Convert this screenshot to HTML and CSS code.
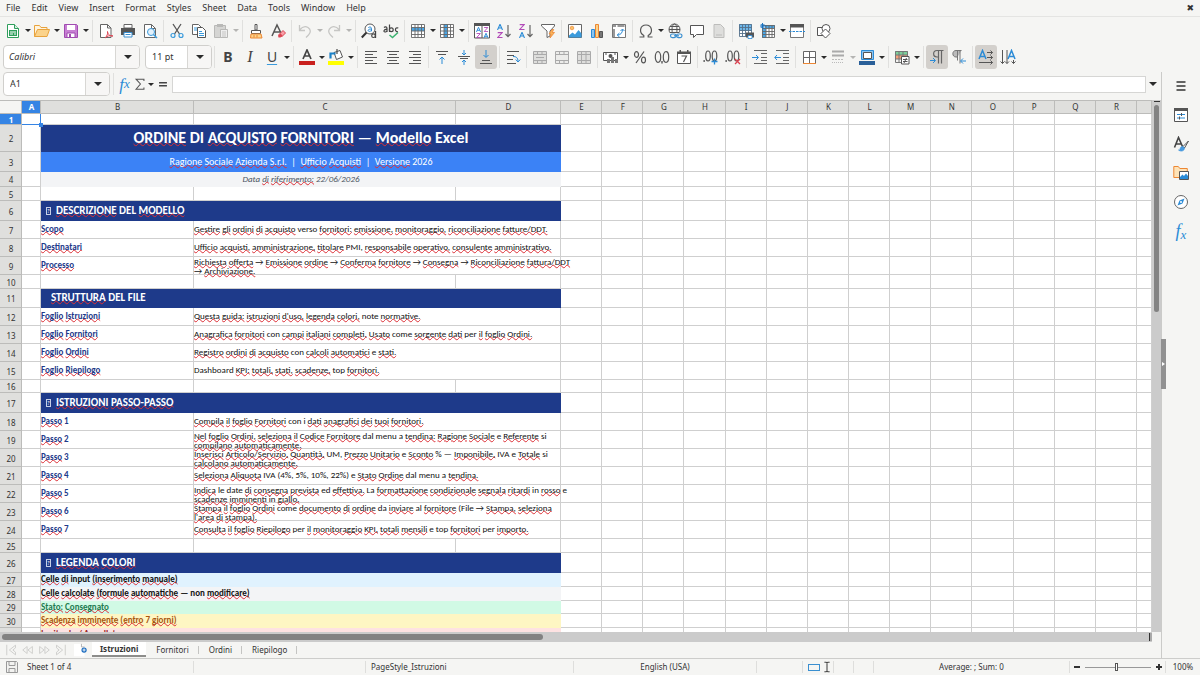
FILE: index.html
```html
<!DOCTYPE html>
<html lang="it">
<head>
<meta charset="utf-8">
<meta name="viewport" content="width=device-width, initial-scale=1">
<title>Ordine di acquisto fornitori</title>
<link rel="stylesheet" href="styles.css">
</head>
<body>
<svg class="sprite" aria-hidden="true">
  <symbol id="new" viewBox="0 0 16 16"><path d="M2.500 1.500h7l4 4v9h-11z" fill="#fff" stroke="#2e9e5b"/><path d="M9.500 1.500v4h4" fill="#d5f0df" stroke="#2e9e5b"/><path d="M4 7h8v6H4z" fill="#2e9e5b"/><path d="M5 9h6M5 11h3M9 11h2" stroke="#fff"/></symbol>
  <symbol id="open" viewBox="0 0 16 16"><path d="M.5 13.500V2.500h5l1.500 2h6v3" fill="#fff3dc" stroke="#e8a33d"/><path d="M.5 13.500l3-7h12l-2.500 7z" fill="#fbd38b" stroke="#e8a33d"/></symbol>
  <symbol id="save" viewBox="0 0 16 16"><path d="M1.500 1.500h12l1 1v12h-13z" fill="#c77fd3" stroke="#a04bb0"/><path d="M4 2h8v5H4z" fill="#fff"/><path d="M4 10h8v4.500H4z" fill="#fff" stroke="#a04bb0"/><path d="M6 11h2v3H6z" fill="#a04bb0"/></symbol>
  <symbol id="pdf" viewBox="0 0 16 16"><path d="M2.500 1.500h7l3.500 3.500v9.500h-10.500z" fill="#fff" stroke="#666"/><path d="M9.500 1.500V5H13" fill="none" stroke="#666"/><path d="M7 15c2-2 3-4 2.500-6.500C10 12 12 13 15 13c-3-1-6 0-8 2z" fill="#fff" stroke="#dc4452"/></symbol>
  <symbol id="print" viewBox="0 0 16 16"><path d="M4 1.500h8V5H4z" fill="#fff" stroke="#666"/><path d="M1 5h14v7H1z" fill="#555"/><path d="M4 9.500h8V14H4z" fill="#fff" stroke="#3a8fd0"/><path d="M5.500 11.500h5" stroke="#3a8fd0"/></symbol>
  <symbol id="preview" viewBox="0 0 16 16"><path d="M2.500 1.500h7l4 4v9h-11z" fill="#fff" stroke="#666"/><path d="M9.500 1.500v4h4" fill="none" stroke="#666"/><circle cx="9" cy="9" r="3.500" fill="#e3f1fb" stroke="#3a9bdc"/><path d="M11.500 11.500l3.500 3.500" stroke="#3a9bdc" stroke-width="1.500"/></symbol>
  <symbol id="cut" viewBox="0 0 16 16"><path d="M4 1l6.500 10M12 1L5.500 11" stroke="#555" stroke-width="1.300" fill="none"/><g fill="none" stroke="#3a9bdc" stroke-width="1.200"><circle cx="4" cy="12.500" r="2"/><circle cx="12" cy="12.500" r="2"/></g></symbol>
  <symbol id="copy" viewBox="0 0 16 16"><path d="M1.500 1.500h6L10 4v7.500H1.500z" fill="#fff" stroke="#666"/><path d="M6.500 4.500h5l3 3v7h-8z" fill="#fff" stroke="#555"/><path d="M3 5h3M3 7h3M8 8.500h3M8 10.500h5M8 12.500h5" stroke="#3a9bdc"/></symbol>
  <symbol id="paste" viewBox="0 0 16 16"><path d="M1.500 2.500h11v12h-11z" fill="#d5d5d3" stroke="#b9b9b7"/><path d="M4 1h6v3H4z" fill="#b9b9b7"/><path d="M7.500 6.500h7v8h-7z" fill="#eee" stroke="#b9b9b7"/><path d="M9 9h4M9 11h4M9 13h4" stroke="#c5c5c3"/></symbol>
  <symbol id="brush" viewBox="0 0 16 16"><path d="M7 1.500h2V7H7z" fill="#fff" stroke="#555"/><path d="M3.500 7.500h9v3h-9z" fill="#fff" stroke="#555"/><path d="M3 11h10l1 4H2.500z" fill="#fbd38b" stroke="#ed8733"/><path d="M6 12v2.500M9 12v2.500" stroke="#ed8733"/></symbol>
  <symbol id="clear" viewBox="0 0 16 16"><path d="M2 13L7 2l4 8M4 9h6" fill="none" stroke="#555" stroke-width="1.500"/><path d="M9 11.500l4-4 2.500 2.500-4 4z" fill="#f7a0a8" stroke="#dc4452"/><path d="M8 12.500l2.500-2 2 2-2 2H8.500z" fill="#dc4452"/></symbol>
  <symbol id="undo" viewBox="0 0 16 16"><path d="M2.500 2v5.500H8M2.500 7C5 4 8.500 3 11 4.500c3 2 3 5 .5 7.500L9 14.500" fill="none" stroke="#c6c6c4" stroke-width="1.300"/></symbol>
  <symbol id="redo" viewBox="0 0 16 16"><path d="M13.500 2v5.500H8M13.500 7C11 4 7.500 3 5 4.500c-3 2-3 5-.5 7.500L7 14.500" fill="none" stroke="#c6c6c4" stroke-width="1.300"/></symbol>
  <symbol id="find" viewBox="0 0 16 16"><circle cx="9" cy="6" r="5" fill="#fff" stroke="#555"/><path d="M5.500 9.500L.8 14.500" stroke="#333" stroke-width="2"/><path d="M7.300 4.600c1-1 3.200-.8 3.200.9v2.800M10.500 6c-4-.3-4.200 2.400-2 2.400 1 0 2-.7 2-1.500" fill="none" stroke="#2b8bd6"/><path d="M14.500 8v7" stroke="#444" stroke-width="1.300"/><circle cx="12.500" cy="12.700" r="1.800" fill="#f5f5f3" stroke="#444" stroke-width="1.200"/></symbol>
  <symbol id="spell" viewBox="0 0 16 16"><g fill="none" stroke="#444" stroke-width="1.200"><path d="M1 4.500c1-1 3-1 3 1V9M4 6.500C1 6 0 9 2 9c1 0 2-.8 2-1.500"/><path d="M6.500 1.500V9"/><circle cx="8.300" cy="6.800" r="1.900"/><path d="M15.300 5c-3.500-1.200-4 4-.3 3.800"/></g><path d="M6.500 12l3 2.500 5.500-5" fill="none" stroke="#3cb371" stroke-width="1.500"/></symbol>
  <symbol id="row" viewBox="0 0 16 16"><path d="M1 1h14v13.500H1z" fill="#fff"/><path d="M1 4.500h14v3.500H1z" fill="#4aa5e4"/><path d="M1.500 1.500h13v13h-13zM1.500 4.500h13M1.500 8h13M1.500 11.500h13M5 1.500v13M8 1.500v13M11.500 1.500v13" fill="none" stroke="#666" stroke-width=".9"/></symbol>
  <symbol id="col" viewBox="0 0 16 16"><path d="M1 1h14v13.500H1z" fill="#fff"/><path d="M5 1h3.500v14H5z" fill="#4aa5e4"/><path d="M1.500 1.500h13v13h-13zM1.500 4.500h13M1.500 8h13M1.500 11.500h13M5 1.500v13M8.500 1.500v13M11.500 1.500v13" fill="none" stroke="#666" stroke-width=".9"/></symbol>
  <symbol id="lA" viewBox="0 0 6 6"><path d="M.5 6L3 .3 5.500 6M1.300 4h3.400" fill="none" stroke="#2b8bd6" stroke-width="1.100"/></symbol>
  <symbol id="lZ" viewBox="0 0 6 6"><path d="M.7.600h4.500L.8 5.500h4.700" fill="none" stroke="#b24bb8" stroke-width="1.100"/></symbol>
  <symbol id="sort" viewBox="0 0 16 16"><path d="M.5.500h15v14.500H.5z" fill="#fff" stroke="#555"/><path d="M0 0h16v3H0z" fill="#555"/><path d="M8 3v12" stroke="#555"/><use href="#lA" x="2" y="4" width="5" height="5"/><use href="#lZ" x="2" y="10" width="5" height="5"/><use href="#lZ" x="9.500" y="4" width="5" height="5"/><use href="#lA" x="9.500" y="10" width="5" height="5"/></symbol>
  <symbol id="az" viewBox="0 0 16 16"><use href="#lA" x="1" y="1" width="6" height="6"/><use href="#lZ" x="1" y="9" width="6" height="6"/><path d="M12 2v11.500M9.500 11l2.500 2.700 2.500-2.700" fill="none" stroke="#666" stroke-width="1.200"/></symbol>
  <symbol id="za" viewBox="0 0 16 16"><use href="#lZ" x="1" y="1" width="6" height="6"/><use href="#lA" x="1" y="9" width="6" height="6"/><path d="M12 2v11.500M9.500 11l2.500 2.700 2.500-2.700" fill="none" stroke="#666" stroke-width="1.200"/></symbol>
  <symbol id="filter" viewBox="0 0 16 16"><path d="M1.500 1.500h13v1.500L10 8v5l-3 1.500V8L1.500 3z" fill="#fff" stroke="#666"/><path d="M12 6.500L9 11h2l-1 4 4.500-5.500h-2.300l1.500-3z" fill="#f9b65c" stroke="#ed8733" stroke-width=".8"/></symbol>
  <symbol id="image" viewBox="0 0 16 16"><path d="M1.500 1.500h13v13h-13z" fill="#fff" stroke="#666"/><circle cx="5" cy="5" r="1.800" fill="#f9c36b" stroke="#ed8733" stroke-width=".7"/><path d="M2 12.500l3.500-3 2.500 2 3.500-4.500 3 3.500v4H2z" fill="#3a9bdc"/></symbol>
  <symbol id="chart" viewBox="0 0 16 16"><path d="M2.500 6.500h3v8h-3z" fill="#8cc4ef" stroke="#2b8bd6"/><path d="M6.500 1.500h3v13h-3z" fill="#fbd38b" stroke="#ed8733"/><path d="M10.500 8.500h3v6h-3z" fill="#777" stroke="#555"/></symbol>
  <symbol id="pivot" viewBox="0 0 16 16"><path d="M1.500 1.500h13v13h-13z" fill="#fff" stroke="#777"/><path d="M2 3h3M6.500 3h7M3 6v8" stroke="#999" stroke-width="2"/><path d="M6.500 12c3 0 5-2 5-5.500M9.500 8l2-2 2 2M8.500 10l-2.300 2 2.300 2" fill="none" stroke="#2b8bd6"/></symbol>
  <symbol id="omega" viewBox="0 0 16 16"><path d="M1.500 14h4.300v-1.500C.5 9.500 2 2 8 2s7.500 7.500 2.200 10.500V14h4.300" fill="none" stroke="#555" stroke-width="1.200"/></symbol>
  <symbol id="link" viewBox="0 0 16 16"><g fill="none" stroke="#555"><circle cx="7.500" cy="6.500" r="5.500"/><ellipse cx="7.500" cy="6.500" rx="2.500" ry="5.500"/><path d="M2 6.500h11M3 3.500h9M3 9.500h9"/></g><path d="M3 10h13v6H3z" fill="#f5f5f3"/><g fill="none" stroke="#3a8fd0" stroke-width="1.200"><rect x="3.500" y="11" width="5.500" height="3.600" rx="1.800"/><rect x="9.500" y="11" width="5.500" height="3.600" rx="1.800"/><path d="M7 12.800h5"/></g></symbol>
  <symbol id="comment" viewBox="0 0 16 16"><path d="M1.500 2.500h13v9H7.500l-3 3v-3h-3z" fill="#fff" stroke="#555"/></symbol>
  <symbol id="header" viewBox="0 0 16 16"><path d="M3 1.500h6.500l3.500 3.500v9.500H3z" fill="#dededc" stroke="#bdbdbb"/><path d="M5 12h6" stroke="#bdbdbb"/></symbol>
  <symbol id="area" viewBox="0 0 16 16"><path d="M1 1h13v12H1z" fill="#fff"/><path d="M1 1h13v7H1z" fill="#6db7ea"/><path d="M1.500 1.500h12v12h-12zM1.500 4.500h12M1.500 7.500h12M1.500 10.500h12M4.500 1.500v12M7.500 1.500v12M10.500 1.500v12" fill="none" stroke="#55718a" stroke-width=".9"/><path d="M8 9.500h8v5H8z" fill="#555"/><path d="M10 12.500h4v3h-4z" fill="#fff" stroke="#2b8bd6" stroke-width=".8"/></symbol>
  <symbol id="freeze" viewBox="0 0 16 16"><path d="M2 2h13v13H2z" fill="#fff"/><path d="M5 2h10v3H5zM2 5h4v10H2z" fill="#4aa5e4"/><path d="M2.500 2.500h12v12h-12zM2.500 5.500h12M2.500 8.500h12M2.500 11.500h12M6 2.500v12M9 2.500v12M12 2.500v12" fill="none" stroke="#666" stroke-width=".9"/><path d="M2.500 0v6M0 3h6M.8 1l3.500 4M4.300 1L.8 5" stroke="#1a73c0"/></symbol>
  <symbol id="split" viewBox="0 0 16 16"><path d="M1.500 1.500h13v13h-13z" fill="#fff" stroke="#777"/><path d="M1 1h14v3.500H1z" fill="#555"/><path d="M0 8.500h16" stroke="#2b8bd6" stroke-dasharray="2.500 1"/></symbol>
  <symbol id="shapes" viewBox="0 0 16 16"><g fill="#fff" stroke="#555"><path d="M1.500 4.500h8v8h-8z"/><circle cx="10" cy="5.500" r="4"/><path d="M9.500 6L14 10.500 9.500 15 5 10.500z"/></g></symbol>
  <symbol id="fontcolor" viewBox="0 0 16 16"><path d="M4 10L8 1l4 9M5.300 7h5.400" fill="none" stroke="#444" stroke-width="1.700"/><path d="M0 12h16v4H0z" fill="#c9211e"/></symbol>
  <symbol id="fill" viewBox="0 0 16 16"><path d="M6 3.500l6-2 2.500 6.500-6 2.500z" fill="#fff" stroke="#555"/><path d="M9 0v5" stroke="#555" stroke-width="1.300"/><path d="M2.500 9.500V4.500h5" fill="none" stroke="#1c82c9" stroke-width="2.200"/><path d="M0 12h16v4H0z" fill="#ffff00"/></symbol>
  <symbol id="left" viewBox="0 0 16 16"><path d="M2 2.500h12M2 5.500h8M2 8.500h12M2 11.500h8M2 14.500h12" stroke="#555"/></symbol>
  <symbol id="center" viewBox="0 0 16 16"><path d="M2 2.500h12M4 5.500h8M2 8.500h12M4 11.500h8M2 14.500h12" stroke="#555"/></symbol>
  <symbol id="right" viewBox="0 0 16 16"><path d="M2 2.500h12M6 5.500h8M2 8.500h12M6 11.500h8M2 14.500h12" stroke="#555"/></symbol>
  <symbol id="top" viewBox="0 0 16 16"><path d="M2 2.500h12M4 5.500h8" stroke="#555"/><path d="M8 15V8.500M5.500 10.500L8 8l2.500 2.500" fill="none" stroke="#2b8bd6"/></symbol>
  <symbol id="middle" viewBox="0 0 16 16"><path d="M2 7.500h12M4 9.500h8" stroke="#555"/><path d="M8 1v4.500M6 4l2 2 2-2M8 16v-4.500M6 13l2-2 2 2" fill="none" stroke="#2b8bd6"/></symbol>
  <symbol id="bottom" viewBox="0 0 16 16"><path d="M2 14.500h12M4 11.500h8" stroke="#555"/><path d="M8 1v7M5.500 6L8 8.500 10.500 6" fill="none" stroke="#2b8bd6"/></symbol>
  <symbol id="wrap" viewBox="0 0 16 16"><path d="M2 2.500h12M2 6.500h7M2 10.500h6M2 14.500h9" stroke="#555"/><path d="M8 7.500c3 0 5 1 5 5M10.700 10.500l2.300 2.500 2.300-2.500" fill="none" stroke="#2b8bd6"/></symbol>
  <symbol id="mergeA" viewBox="0 0 16 16"><path d="M1.500 2.500h13v12h-13z" fill="#dededc" stroke="#aaa"/><path d="M1 5.500h14M1 11.500h14M5.500 2v3.500M10 2v3.500M5.500 12v3M10 12v3M4 8.500h8" stroke="#aaa"/></symbol>
  <symbol id="mergeB" viewBox="0 0 16 16"><path d="M1.500 2.500h13v12h-13z" fill="#ececea" stroke="#aaa"/><path d="M1 5.500h14M1 11.500h14M5.500 2v3.500M10 2v3.500M5.500 12v3M10 12v3" stroke="#aaa"/></symbol>
  <symbol id="mergeC" viewBox="0 0 16 16"><path d="M1.500 2.500h13v12h-13z" fill="#dededc" stroke="#aaa"/><path d="M1 5.500h14M1 11.500h14M5.500 2v13M10 2v13" stroke="#aaa"/></symbol>
  <symbol id="currency" viewBox="0 0 16 16"><path d="M.5 3.500h14v8H.5z" fill="#fff" stroke="#555"/><circle cx="7.500" cy="7" r="2" fill="#555"/><path d="M2 5h2M11 5h2" stroke="#555"/><path d="M4 10h3v4H4zM8 8h3v6H8zM12 10h3v4h-3z" fill="#777"/></symbol>
  <symbol id="percent" viewBox="0 0 16 16"><g fill="none" stroke="#555" stroke-width="1.200"><ellipse cx="4.500" cy="5.500" rx="2" ry="2.800"/><ellipse cx="11.500" cy="11" rx="2" ry="2.800"/><path d="M12 2.500L4 14"/></g></symbol>
  <symbol id="number" viewBox="0 0 16 16"><g fill="none" stroke="#555" stroke-width="1.200"><ellipse cx="4" cy="8" rx="2.700" ry="5.300"/><ellipse cx="12" cy="8" rx="2.700" ry="5.300"/></g><path d="M7.300 12h1.400v2.500H7.300z" fill="#555"/></symbol>
  <symbol id="date" viewBox="0 0 16 16"><path d="M1.500 3.500h13v11h-13z" fill="#fff" stroke="#555"/><path d="M1 2.500h14V5H1zM3.500 1h1.500v2H3.500zM11 1h1.500v2H11z" fill="#555"/><path d="M5.500 7h5l-3 6" fill="none" stroke="#555" stroke-width="1.200"/></symbol>
  <symbol id="decadd" viewBox="0 0 16 16"><g fill="none" stroke="#555" stroke-width="1.200"><ellipse cx="5" cy="7" rx="2.300" ry="5"/><ellipse cx="11.500" cy="7" rx="2.300" ry="5"/></g><path d="M.5 11h1.300v2H.5z" fill="#555"/><path d="M11.500 9.500v6M8.500 12.500h6" stroke="#2b8bd6" stroke-width="1.300"/></symbol>
  <symbol id="decdel" viewBox="0 0 16 16"><g fill="none" stroke="#555" stroke-width="1.200"><ellipse cx="5" cy="7" rx="2.300" ry="5"/><ellipse cx="11.500" cy="7" rx="2.300" ry="5"/></g><path d="M.5 11h1.300v2H.5z" fill="#555"/><path d="M10 10l5 5M15 10l-5 5" stroke="#dc4452" stroke-width="1.300"/></symbol>
  <symbol id="indent" viewBox="0 0 16 16"><path d="M2 1.500h13M9 4.500h6M9 8.500h6M9 11.500h6M2 14.500h13" stroke="#666"/><path d="M0 8.500h6M4 6l2.500 2.500L4 11" fill="none" stroke="#2b8bd6"/></symbol>
  <symbol id="outdent" viewBox="0 0 16 16"><path d="M2 1.500h13M9 4.500h6M9 8.500h6M9 11.500h6M2 14.500h13" stroke="#666"/><path d="M7 8.500H1M3 6L.7 8.500 3 11" fill="none" stroke="#2b8bd6"/></symbol>
  <symbol id="border" viewBox="0 0 16 16"><path d="M2.500 14.500v-12h12v12" fill="#fff" stroke="#666"/><path d="M8.500 2.500v12M2.500 8.500h12" stroke="#666"/><path d="M2 14.500h13" stroke="#ed8733"/></symbol>
  <symbol id="lines" viewBox="0 0 16 16"><path d="M2 2.500h12M2 6.500h12" stroke="#aaa" stroke-width="2"/><path d="M2 10.500h12" stroke="#bbb" stroke-dasharray="2 1"/><path d="M2 13.500h12" stroke="#bbb" stroke-dasharray="1 1"/></symbol>
  <symbol id="bcolor" viewBox="0 0 16 16"><path d="M2.500 1.500h12v9h-12z" fill="#8cc4ef" stroke="#2b8bd6"/><path d="M4.500 3.500h8v6h-8z" fill="#fff" stroke="#555"/><path d="M0 12h16v4H0z" fill="#2a6099"/></symbol>
  <symbol id="cond" viewBox="0 0 16 16"><path d="M1 2h13v4H1z" fill="#7ccf9a"/><path d="M1 6h13v4H1z" fill="#f7a07a"/><path d="M1.500 2.500h12v11h-12zM1.500 6h12M1.500 10h12M5 2.500v11M9 2.500v11" fill="none" stroke="#777"/><path d="M7.500 7.500h7.500v7.500H7.500z" fill="#fff" stroke="#555"/><path d="M9 10.500h4.500M9 12.500h4.500M12.500 9l-2.500 5" stroke="#555"/></symbol>
  <symbol id="ltr" viewBox="0 0 16 16"><path d="M14.500 1.500H8C3.500 1.500 3.500 8 8 8h1.500M9.500 1.500v13M12.500 1.500v13" fill="none" stroke="#666" stroke-width="1.200"/><path d="M1 11.500h5M4 9l2.500 2.500L4 14" fill="none" stroke="#2b8bd6"/></symbol>
  <symbol id="rtl" viewBox="0 0 16 16"><path d="M10.500 1.500H5C.8 1.500.8 8 5 8h1.500z" fill="#bbb"/><path d="M10.500 1.500H5C.8 1.500.8 8 5 8h1.500M6.500 1.500v10M9 1.500v13" fill="none" stroke="#777"/><path d="M15 12h-5M12 9.500L9.500 12l2.500 2.500" fill="none" stroke="#2b8bd6"/></symbol>
  <symbol id="dirh" viewBox="0 0 16 16"><path d="M1 10L4.500 1.500 8 10M2.200 7.500h4.600" fill="none" stroke="#2b8bd6" stroke-width="1.500"/><path d="M9 3.500h5.500M12.500 1.500l2 2-2 2M9 8.500h5.500M12.500 6.500l2 2-2 2M1 13.500h13.500M12.500 11.500l2 2-2 2" fill="none" stroke="#555"/></symbol>
  <symbol id="dirv" viewBox="0 0 16 16"><path d="M8 10l3.500-8.500L15 10M9.200 7.500h4.600" fill="none" stroke="#2b8bd6" stroke-width="1.500"/><path d="M2.500 1v13.500M.5 12.500l2 2 2-2M7 1v13.500M5 12.500l2 2 2-2M13.500 11v3.500M11.500 12.500l2 2 2-2" fill="none" stroke="#555"/></symbol>
  <symbol id="sum" viewBox="0 0 16 16"><path d="M12.500 4.500V2.500h-9L8.500 8l-5 6h9v-2" fill="none" stroke="#555" stroke-width="1.200"/></symbol>
  <symbol id="equal" viewBox="0 0 16 16"><path d="M3.500 6.500h9M3.500 10h9" stroke="#444" stroke-width="1.600"/></symbol>
  <symbol id="menu" viewBox="0 0 16 16"><path d="M3.500 4h9M3.500 8h9M3.500 12h9" stroke="#333" stroke-width="1.400"/></symbol>
  <symbol id="props" viewBox="0 0 16 16"><path d="M1.500 1.500h13v13h-13z" fill="#fff" stroke="#555"/><path d="M1 1h14v3H1z" fill="#555"/><path d="M4 7.500h8M4 11h8" stroke="#2b8bd6"/><path d="M8.500 6v3M6.500 9.500v3" stroke="#555"/></symbol>
  <symbol id="stylesi" viewBox="0 0 16 16"><path d="M1.500 11.500L5.500 1.500l4 9M3 8h5.500" fill="none" stroke="#444" stroke-width="1.600"/><path d="M15.500 5L10 10.500l1.500 1.500L15.500 5z" fill="#fff" stroke="#555"/><path d="M10 10.500c-2 0-3 1-3 3.500H5.500c2.500 2 6 1 6-2z" fill="#4a9be0" stroke="#2b8bd6" stroke-width=".6"/></symbol>
  <symbol id="gallery" viewBox="0 0 16 16"><path d="M.8 12.500V1.500h4.500l1.500 2h7.500v9z" fill="#fde3b8" stroke="#ed8733"/><path d="M6.500 6.500h9v8h-9z" fill="#fff" stroke="#555"/><path d="M7 12l2.500-2.500L11 11l2-2.500 2 2.500v3H7z" fill="#2b8bd6"/></symbol>
  <symbol id="nav" viewBox="0 0 16 16"><circle cx="8" cy="8" r="6.500" fill="#fff" stroke="#666"/><path d="M11.500 4.500L9.500 9.500l-5 2 2-5z" fill="#2b8bd6"/><circle cx="8" cy="8" r="1" fill="#fff"/></symbol>
  <symbol id="ibeam" viewBox="0 0 16 16"><path d="M5 2.500h2l1 .5 1-.5h2M5 13.500h2l1-.5 1 .5h2M8 3v10" fill="none" stroke="#444" stroke-width="1.200"/></symbol>
  <symbol id="disk" viewBox="0 0 16 16"><path d="M2.500 2.500h10l1 1v10h-11z" fill="#f2f2f0" stroke="#999"/><path d="M5 2.500h6v4H5zM5 13.500v-4h6v4" fill="none" stroke="#999"/></symbol>
  <symbol id="addsheet" viewBox="0 0 16 16"><path d="M0 1h9l3 3v11H0z" fill="#fff"/><path d="M8.500 1v3.500H12" fill="none" stroke="#aaa"/><circle cx="11.500" cy="8" r="3" fill="#1a6bbf"/><path d="M11.500 6.200v3.600M9.700 8h3.600" stroke="#fff"/></symbol>
  <symbol id="first" viewBox="0 0 16 16"><path d="M2 2v12M12 2.500L5 8l7 5.500v-3L9 8l3-2.500z" fill="none" stroke="#cacac8"/></symbol>
  <symbol id="prev" viewBox="0 0 16 16"><path d="M7 4L2 8l5 4zM13 4L8 8l5 4z" fill="none" stroke="#cacac8"/></symbol>
</svg>

<nav class="menubar" aria-label="Menu">
  <button>File</button><button>Edit</button><button>View</button><button>Insert</button><button>Format</button><button>Styles</button><button>Sheet</button><button>Data</button><button>Tools</button><button>Window</button><button>Help</button>
  <button class="close" aria-label="Close document">✖</button>
</nav>

<div class="toolbar standard" role="toolbar" aria-label="Standard">
  <button class="tool" aria-label="New"><svg><use href="#new"/></svg></button><button class="caret" aria-label="New options"></button>
  <button class="tool" aria-label="Open"><svg><use href="#open"/></svg></button><button class="caret" aria-label="Open options"></button>
  <button class="tool" aria-label="Save"><svg><use href="#save"/></svg></button><button class="caret" aria-label="Save options"></button>
  <span class="sep"></span>
  <button class="tool" aria-label="Export as PDF"><svg><use href="#pdf"/></svg></button>
  <button class="tool" aria-label="Print"><svg><use href="#print"/></svg></button>
  <button class="tool" aria-label="Print preview"><svg><use href="#preview"/></svg></button>
  <span class="sep"></span>
  <button class="tool" aria-label="Cut"><svg><use href="#cut"/></svg></button>
  <button class="tool" aria-label="Copy"><svg><use href="#copy"/></svg></button>
  <button class="tool" aria-label="Paste" disabled><svg><use href="#paste"/></svg></button><button class="caret" aria-label="Paste options" disabled></button>
  <span class="sep"></span>
  <button class="tool" aria-label="Clone formatting"><svg><use href="#brush"/></svg></button>
  <button class="tool" aria-label="Clear formatting"><svg><use href="#clear"/></svg></button>
  <span class="sep"></span>
  <button class="tool" aria-label="Undo" disabled><svg><use href="#undo"/></svg></button><button class="caret" aria-label="Undo list" disabled></button>
  <button class="tool" aria-label="Redo" disabled><svg><use href="#redo"/></svg></button><button class="caret" aria-label="Redo list" disabled></button>
  <span class="sep"></span>
  <button class="tool" aria-label="Find and replace"><svg><use href="#find"/></svg></button>
  <button class="tool" aria-label="Spelling"><svg><use href="#spell"/></svg></button>
  <span class="sep"></span>
  <button class="tool" aria-label="Row"><svg><use href="#row"/></svg></button><button class="caret" aria-label="Row options"></button>
  <button class="tool" aria-label="Column"><svg><use href="#col"/></svg></button><button class="caret" aria-label="Column options"></button>
  <span class="sep"></span>
  <button class="tool" aria-label="Sort"><svg><use href="#sort"/></svg></button>
  <button class="tool" aria-label="Sort ascending"><svg><use href="#az"/></svg></button>
  <button class="tool" aria-label="Sort descending"><svg><use href="#za"/></svg></button>
  <button class="tool" aria-label="AutoFilter"><svg><use href="#filter"/></svg></button>
  <span class="sep"></span>
  <button class="tool" aria-label="Insert image"><svg><use href="#image"/></svg></button>
  <button class="tool" aria-label="Insert chart"><svg><use href="#chart"/></svg></button>
  <button class="tool" aria-label="Pivot table"><svg><use href="#pivot"/></svg></button>
  <span class="sep"></span>
  <button class="tool" aria-label="Special character"><svg><use href="#omega"/></svg></button><button class="caret" aria-label="Character list"></button>
  <button class="tool" aria-label="Hyperlink"><svg><use href="#link"/></svg></button>
  <button class="tool" aria-label="Comment"><svg><use href="#comment"/></svg></button>
  <button class="tool" aria-label="Headers and footers" disabled><svg><use href="#header"/></svg></button>
  <span class="sep"></span>
  <button class="tool" aria-label="Print area"><svg><use href="#area"/></svg></button>
  <button class="tool" aria-label="Freeze panes"><svg><use href="#freeze"/></svg></button><button class="caret" aria-label="Freeze options"></button>
  <button class="tool" aria-label="Split window"><svg><use href="#split"/></svg></button>
  <span class="sep"></span>
  <button class="tool" aria-label="Draw functions"><svg><use href="#shapes"/></svg></button>
</div>

<div class="toolbar formatting" role="toolbar" aria-label="Formatting">
  <span class="combo font"><input class="italic" aria-label="Font name" value="Calibri"><button aria-label="Font list"></button></span>
  <span class="combo size"><input aria-label="Font size" value="11 pt"><button aria-label="Size list"></button></span>
  <span class="sep"></span>
  <button class="tool letter bold" aria-label="Bold">B</button>
  <button class="tool letter slanted" aria-label="Italic">I</button>
  <button class="tool letter under" aria-label="Underline">U</button><button class="caret" aria-label="Underline options"></button>
  <span class="sep"></span>
  <button class="tool" aria-label="Font color"><svg><use href="#fontcolor"/></svg></button><button class="caret" aria-label="Font colors"></button>
  <button class="tool" aria-label="Background color"><svg><use href="#fill"/></svg></button><button class="caret" aria-label="Background colors"></button>
  <span class="sep"></span>
  <button class="tool" aria-label="Align left"><svg><use href="#left"/></svg></button>
  <button class="tool" aria-label="Align center"><svg><use href="#center"/></svg></button>
  <button class="tool" aria-label="Align right"><svg><use href="#right"/></svg></button>
  <span class="sep"></span>
  <button class="tool" aria-label="Align top"><svg><use href="#top"/></svg></button>
  <button class="tool" aria-label="Center vertically"><svg><use href="#middle"/></svg></button>
  <button class="tool active" aria-label="Align bottom" aria-pressed="true"><svg><use href="#bottom"/></svg></button>
  <span class="sep"></span>
  <button class="tool" aria-label="Wrap text"><svg><use href="#wrap"/></svg></button>
  <span class="sep"></span>
  <button class="tool" aria-label="Merge and center" disabled><svg><use href="#mergeA"/></svg></button>
  <button class="tool" aria-label="Merge cells" disabled><svg><use href="#mergeB"/></svg></button>
  <button class="tool" aria-label="Unmerge cells" disabled><svg><use href="#mergeC"/></svg></button>
  <span class="sep"></span>
  <button class="tool" aria-label="Currency"><svg><use href="#currency"/></svg></button><button class="caret" aria-label="Currency list"></button>
  <button class="tool" aria-label="Percent"><svg><use href="#percent"/></svg></button>
  <button class="tool" aria-label="Number"><svg><use href="#number"/></svg></button>
  <button class="tool" aria-label="Date"><svg><use href="#date"/></svg></button>
  <span class="sep"></span>
  <button class="tool" aria-label="Add decimal place"><svg><use href="#decadd"/></svg></button>
  <button class="tool" aria-label="Delete decimal place"><svg><use href="#decdel"/></svg></button>
  <span class="sep"></span>
  <button class="tool" aria-label="Increase indent"><svg><use href="#indent"/></svg></button>
  <button class="tool" aria-label="Decrease indent"><svg><use href="#outdent"/></svg></button>
  <span class="sep"></span>
  <button class="tool" aria-label="Borders"><svg><use href="#border"/></svg></button><button class="caret" aria-label="Border list"></button>
  <button class="tool" aria-label="Border style" disabled><svg><use href="#lines"/></svg></button><button class="caret" aria-label="Border styles" disabled></button>
  <button class="tool" aria-label="Border color"><svg><use href="#bcolor"/></svg></button><button class="caret" aria-label="Border colors"></button>
  <span class="sep"></span>
  <button class="tool" aria-label="Conditional formatting"><svg><use href="#cond"/></svg></button><button class="caret" aria-label="Conditions"></button>
  <span class="sep"></span>
  <button class="tool active" aria-label="Left to right" aria-pressed="true"><svg><use href="#ltr"/></svg></button>
  <button class="tool" aria-label="Right to left"><svg><use href="#rtl"/></svg></button>
  <span class="sep"></span>
  <button class="tool active" aria-label="Horizontal text" aria-pressed="true"><svg><use href="#dirh"/></svg></button>
  <button class="tool" aria-label="Vertical text"><svg><use href="#dirv"/></svg></button>
</div>

<main class="workspace">
  <section class="document">
    <div class="formula">
      <span class="combo name"><input aria-label="Name box" value="A1"><button aria-label="Names"></button></span>
      <span class="sep"></span>
      <button class="mini fx" aria-label="Function wizard">f<sub>x</sub></button>
      <button class="mini" aria-label="Select function"><svg><use href="#sum"/></svg></button><button class="caret" aria-label="Function list"></button>
      <button class="mini wide" aria-label="Formula"><svg><use href="#equal"/></svg></button>
      <input class="line" aria-label="Input line">
      <button class="expand" aria-label="Expand formula bar"></button>
    </div>
    <div class="pane">
      <div class="grid"><table id="sheet"></table></div>
      <div class="vscroll"><div class="split"></div><div class="thumb"></div></div>
    </div>
    <div class="hrow"><div class="hscroll"><div class="thumb"></div><div class="end"></div></div><div class="corner"></div></div>
    <div class="tabs">
      <div class="navs">
        <button aria-label="First sheet" disabled><svg><use href="#first"/></svg></button>
        <button aria-label="Previous sheet" disabled><svg><use href="#prev"/></svg></button>
        <button class="flip" aria-label="Next sheet" disabled><svg><use href="#prev"/></svg></button>
        <button class="flip" aria-label="Last sheet" disabled><svg><use href="#first"/></svg></button>
      </div>
      <button class="add" aria-label="Add sheet"><svg><use href="#addsheet"/></svg></button>
      <button class="tab current">Istruzioni</button><button class="tab">Fornitori</button><button class="tab">Ordini</button><button class="tab">Riepilogo</button>
    </div>
  </section>
  <aside class="sidebar">
    <button class="handle" aria-label="Hide sidebar"></button>
    <button aria-label="Sidebar settings"><svg><use href="#menu"/></svg></button>
    <button aria-label="Properties"><svg><use href="#props"/></svg></button>
    <button aria-label="Styles"><svg><use href="#stylesi"/></svg></button>
    <button aria-label="Gallery"><svg><use href="#gallery"/></svg></button>
    <button aria-label="Navigator"><svg><use href="#nav"/></svg></button>
    <button class="fx" aria-label="Functions">f<sub>x</sub></button>
  </aside>
</main>

<footer class="status">
  <div class="cell count"><svg><use href="#disk"/></svg><span>Sheet 1 of 4</span></div>
  <div class="cell blank"></div>
  <div class="cell page">PageStyle_Istruzioni</div>
  <div class="cell lang">English (USA)</div>
  <div class="cell gap"></div>
  <div class="cell mode"><span class="box"></span><svg><use href="#ibeam"/></svg></div>
  <div class="cell small"></div>
  <div class="cell small"></div>
  <div class="cell sum">Average: ; Sum: 0</div>
  <div class="cell zoom"><button class="minus" aria-label="Zoom out"></button><input type="range" aria-label="Zoom" min="0" max="100" value="49"><button class="plus" aria-label="Zoom in"></button></div>
  <div class="percent">100%</div>
</footer>
<script src="app.js"></script>
</body>
</html>
```

FILE: styles.css
```css
* { box-sizing: border-box; }
body {
  margin: 0;
  height: 100vh;
  display: flex;
  flex-direction: column;
  overflow: hidden;
  background: #f5f5f3;
  color: #333;
  font: 9px/12px "Noto Sans", sans-serif;
}
button, input {
  margin: 0;
  padding: 0;
  border: 0;
  background: none;
  color: inherit;
  font: inherit;
}
svg { width: 16px; height: 16px; display: block; }
.sprite { position: absolute; width: 0; height: 0; }

.menubar {
  flex: none;
  height: 17px;
  display: flex;
  align-items: center;
  gap: 11px;
  padding: 0 6px;
  border-bottom: 1px solid #e4e4e2;
}
.menubar .close { margin-left: auto; font: 9px/12px "DejaVu Sans", sans-serif; }

.toolbar { flex: none; display: flex; align-items: center; padding: 0 2px; }
.standard { height: 27px; }
.formatting { height: 28px; padding-bottom: 2px; }
.tool {
  flex: none;
  width: 22px;
  height: 24px;
  display: flex;
  align-items: center;
  justify-content: center;
  border-radius: 3px;
}
.tool.active { background: #d3d0cc; }
.caret { flex: none; width: 7px; height: 24px; display: flex; align-items: center; justify-content: center; }
.caret::after, .combo button::after, .expand::after {
  content: "";
  border: 3px solid transparent;
  border-top: 3px solid #2b2b2b;
  border-bottom: 0;
}
.caret:disabled::after { border-top-color: #b5b5b3; }
.combo button::after, .expand::after { border-width: 4px 4px 0; }
.sep { flex: none; width: 1px; height: 22px; margin: 0 2px; background: #e0e0de; }
.caret + .sep { margin-left: 3px; }
.letter { font-size: 14px; color: #444; }
.bold { font-weight: 700; }
.slanted { font-family: "Liberation Serif", serif; font-style: italic; font-size: 16px; }
.under { text-decoration: underline; text-decoration-color: #3a9bdc; text-underline-offset: 2px; }

.combo {
  display: flex;
  height: 24px;
  border: 1px solid #d0cfcc;
  border-radius: 4px;
  background: #fff;
  overflow: hidden;
}
.combo input { flex: 1; min-width: 0; padding: 0 6px; }
.combo .italic { font-style: italic; padding-left: 5px; }
.combo button {
  width: 24px;
  display: flex;
  align-items: center;
  justify-content: center;
  border-left: 1px solid #d8d7d4;
  background: #f7f6f5;
}
.font { width: 137px; margin: 0 5px 0 1px; }
.size { width: 67px; }
.name { width: 107px; margin-left: 3px; }

.workspace { flex: 1; min-height: 0; display: flex; }
.document { flex: 1; min-width: 0; display: flex; flex-direction: column; }
.formula { flex: none; height: 28px; display: flex; align-items: center; padding-bottom: 4px; }
.mini { width: 15px; height: 20px; display: flex; align-items: center; justify-content: center; }
.mini svg { width: 14px; height: 14px; }
.mini.wide { width: 18px; }
.mini.wide svg { width: 16px; }
.fx { color: #2b8bd6; font: italic 17px/17px "Liberation Serif", serif; }
.fx sub { font-size: 13px; line-height: 0; vertical-align: -2px; }
.formula .sep { margin: 0 3px; }
.formula .line { flex: 1; height: 17px; border: 1px solid #d6d6d4; background: #fff; padding: 0 4px; }
.expand { width: 15px; display: flex; justify-content: center; padding-right: 2px; }

.pane { flex: 1; min-height: 0; display: flex; }
.grid { flex: 1; min-width: 0; overflow: hidden; background: #fff; }
table { width: 100%; table-layout: fixed; border-collapse: separate; border-spacing: 0; }
td, th { padding: 0; box-shadow: inset -1px -1px #cfcfcf; }
th { background: #dfdfdd; font: 8px/10px "Noto Sans", sans-serif; text-align: center; box-shadow: inset -1px -1px #bcbcba; }
tbody th { padding-top: 1px; }
thead th { height: 14px; box-shadow: inset -1px -1px #bcbcba, inset 0 1px #bcbcba; }
thead th:first-child { background: #f5f5f3; }
thead th.on, tbody th.on { background: #3584e4; color: #fff; font-weight: 700; }
.c-head { width: 22px; }
.c-a { width: 19px; }
.c-b { width: 153px; }
.c-c { width: 262px; }
.c-d { width: 105px; }
.c-last { width: 15px; }
td { font: 9px/9px Carlito, Lato, sans-serif; color: #111; white-space: nowrap; vertical-align: middle; }
td.cursor { position: relative; box-shadow: inset -1px -1px #3584e4; }
td.cursor::after {
  content: "";
  position: absolute;
  right: -2px;
  bottom: -2px;
  width: 4px;
  height: 4px;
  background: #3584e4;
}
td.label { color: #1e3a8a; font-weight: 700; }
td.label, td.single, td.legend { padding-bottom: 3px; }
td.title, td.subtitle, td.date { text-align: center; box-shadow: none; }
td.title { background: #1e3a8a; color: #fff; font-weight: 700; font-size: 16px; line-height: 20px; padding-bottom: 2px; }
td.subtitle { background: #3b82f6; color: #fff; font-size: 10px; line-height: 12px; }
td.date { background: #f3f4f6; color: #4b5563; font-style: italic; padding-bottom: 2px; }
td.section { background: #1e3a8a; color: #fff; font-weight: 700; font-size: 11px; line-height: 13px; padding: 0 0 2px 10px; box-shadow: none; }
td.section.marked { padding-left: 5px; }
.tofu {
  display: inline-block;
  width: 5px;
  height: 8px;
  margin-right: 5px;
  border: 1px solid #c6cfe6;
  font: 6px/6px Carlito, sans-serif;
  text-align: center;
  vertical-align: 1px;
}
td.legend { font-weight: 700; box-shadow: none; }
.input { background: #e0f2fe; }
.calc { background: #f3f4f6; }
td.done { background: #d1fae5; color: #1f7a50; }
td.soon { background: #fef6c3; color: #a8560f; }
td.late { background: #fee2e2; color: #991b1b; }
.typo {
  text-decoration: underline wavy #dc2f36 1px;
  text-underline-offset: -1px;
  text-decoration-skip-ink: none;
}

.vscroll { flex: none; width: 9px; background: #cbcbcb; padding: 1px; display: flex; flex-direction: column; gap: 3px; align-items: center; }
.vscroll .split { width: 6px; height: 1px; background: #333; }
.vscroll .thumb { width: 5px; height: 39%; border-radius: 3px; background: #828282; }
.hrow { flex: none; height: 10px; display: flex; }
.hscroll { flex: 1; display: flex; align-items: center; justify-content: space-between; padding-left: 2px; background: #cbcbcb; }
.hscroll .thumb { width: 47%; height: 6px; border-radius: 3px; background: #828282; }
.hscroll .end { width: 3px; height: 8px; border-left: 1px solid #333; background: #aaa; }
.corner { width: 9px; }

.tabs { flex: none; height: 16px; display: flex; align-items: stretch; font-size: 8px; }
.navs { display: flex; align-items: center; padding-left: 4px; }
.navs button { width: 16px; }
.navs svg { width: 16px; height: 14px; }
.add svg { width: 14px; height: 14px; }
.flip svg { transform: scaleX(-1); }
.add { width: 24px; padding-left: 6px; }
.tab { position: relative; line-height: 14px; }
.tab + .tab { padding: 0 10px; }
.tab + .tab::after { content: ""; position: absolute; right: 0; top: 4px; width: 1px; height: 8px; background: #c4c4c2; }
.tab.current { padding: 0 8px; background: #fff; font-weight: 700; border-bottom: 2px solid #8d8d8b; margin-bottom: 1px; }

.sidebar {
  position: relative;
  flex: none;
  width: 39px;
  display: flex;
  flex-direction: column;
  align-items: center;
  gap: 13px;
  padding-top: 6px;
  border-left: 1px solid #cbcbc9;
}
.sidebar button { width: 16px; height: 16px; }
.sidebar .fx { font-size: 18px; line-height: 14px; }
.sidebar .handle { position: absolute; left: -1px; top: 50%; margin-top: -26px; width: 5px; height: 50px; background: #919191; }
.handle::after { content: ""; position: absolute; left: 1px; top: 23px; border: 2px solid transparent; border-left: 3px solid #fff; border-right: 0; }

.status { flex: none; height: 17px; display: flex; align-items: center; border-top: 1px solid #cdcdcb; font-size: 8px; }
.cell { height: 12px; display: flex; align-items: center; justify-content: center; border-right: 1px solid #dededc; }
.count { width: 194px; justify-content: flex-start; gap: 7px; padding-left: 4px; }
.blank { width: 172px; }
.page { width: 208px; justify-content: flex-start; padding-left: 5px; }
.lang { width: 183px; }
.gap { width: 46px; }
.mode { width: 31px; padding-left: 5px; }
.mode .box { width: 12px; height: 7px; flex: none; border: 1px solid #3a8fd0; }
.mode svg { width: 14px; height: 14px; flex: none; }
.small { width: 20px; }
.sum { flex: 1; }
.zoom { width: 96px; gap: 4px; }
.zoom button { position: relative; flex: none; width: 8px; height: 8px; }
.zoom button::before, .plus::after { content: ""; position: absolute; background: #333; left: 1px; top: 3px; width: 6px; height: 2px; }
.zoom .plus::after { left: 3px; top: 1px; width: 2px; height: 6px; }
.zoom input { appearance: none; width: 66px; height: 8px; background: linear-gradient(#999, #999) center / 100% 1px no-repeat; }
.zoom input::-webkit-slider-thumb { appearance: none; width: 3px; height: 8px; border: 1px solid #555; background: #fff; }
.percent { width: 34px; text-align: center; }
```

FILE: app.js
```js
// Words that the English and Italian dictionaries both accept.
const known = new Set(['e', 'o', 'con', 'per', 'come', 'file', 'top', 'note', 'menu', 'a', 'in', 'dal', 'la', 'le',
  'date', 'al', 'da', 'ed', 'non', 'input', 'iva', 'um', 'ddt', 'dashboard', 'excel', 'data', 'del', 'si', 'pmi', 'verso']);

const spell = text => text.split(/(\s+)/).map(word => {
  const core = word.replace(/[().,:;]/g, '');
  if (!/[A-Za-zà]{2}/.test(core) || word === 'DI' || known.has(core.toLowerCase())) return word;
  return `<span class="typo">${word}</span>`;
}).join('').replaceAll('\n', '<br>');

// [height, kind, first text, second text]
const rows = [
  [11, 'empty'],
  [27, 'title', 'ORDINE DI ACQUISTO FORNITORI — Modello Excel'],
  [20, 'subtitle', 'Ragione Sociale Azienda S.r.l. \u00a0|\u00a0 Ufficio Acquisti \u00a0|\u00a0 Versione 2026'],
  [15, 'date', 'Data di riferimento: 22/06/2026'],
  [14, 'empty'],
  [20, 'section marked', 'DESCRIZIONE DEL MODELLO'],
  [18, 'text', 'Scopo', 'Gestire gli ordini di acquisto verso fornitori: emissione, monitoraggio, riconciliazione fatture/DDT.'],
  [18, 'text', 'Destinatari', 'Ufficio acquisti, amministrazione, titolare PMI, responsabile operativo, consulente amministrativo.'],
  [18, 'text', 'Processo', 'Richiesta offerta → Emissione ordine → Conferma fornitore → Consegna → Riconciliazione fattura/DDT\n→ Archiviazione.'],
  [14, 'empty'],
  [19, 'section', 'STRUTTURA DEL FILE'],
  [18, 'text', 'Foglio Istruzioni', "Questa guida: istruzioni d'uso, legenda colori, note normative."],
  [18, 'text', 'Foglio Fornitori', 'Anagrafica fornitori con campi italiani completi. Usato come sorgente dati per il foglio Ordini.'],
  [18, 'text', 'Foglio Ordini', 'Registro ordini di acquisto con calcoli automatici e stati.'],
  [18, 'text', 'Foglio Riepilogo', 'Dashboard KPI: totali, stati, scadenze, top fornitori.'],
  [13, 'empty'],
  [20, 'section marked', 'ISTRUZIONI PASSO-PASSO'],
  [18, 'text', 'Passo 1', 'Compila il foglio Fornitori con i dati anagrafici dei tuoi fornitori.'],
  [18, 'text', 'Passo 2', 'Nel foglio Ordini, seleziona il Codice Fornitore dal menu a tendina: Ragione Sociale e Referente si\ncompilano automaticamente.'],
  [18, 'text', 'Passo 3', 'Inserisci Articolo/Servizio, Quantità, UM, Prezzo Unitario e Sconto % — Imponibile, IVA e Totale si\ncalcolano automaticamente.'],
  [18, 'text', 'Passo 4', 'Seleziona Aliquota IVA (4%, 5%, 10%, 22%) e Stato Ordine dal menu a tendina.'],
  [18, 'text', 'Passo 5', 'Indica le date di consegna prevista ed effettiva. La formattazione condizionale segnala ritardi in rosso e\nscadenze imminenti in giallo.'],
  [18, 'text', 'Passo 6', "Stampa il foglio Ordini come documento di ordine da inviare al fornitore (File → Stampa, seleziona\nl'area di stampa)."],
  [18, 'text', 'Passo 7', 'Consulta il foglio Riepilogo per il monitoraggio KPI, totali mensili e top fornitori per importo.'],
  [14, 'empty'],
  [20, 'section marked', 'LEGENDA COLORI'],
  [14, 'legend input', 'Celle di input (inserimento manuale)'],
  [14, 'legend calc', 'Celle calcolate (formule automatiche — non modificare)'],
  [13, 'legend done', 'Stato: Consegnato'],
  [14, 'legend soon', 'Scadenza imminente (entro 7 giorni)'],
  [14, 'legend late', 'In ritardo / Annullato'],
];

const letters = [...'ABCDEFGHIJKLMNOPQR', ''];
const spare = '<td></td>'.repeat(15);

const body = rows.map(([height, kind, first, second], i) => {
  let cells;
  if (kind === 'empty') cells = '<td></td><td></td><td></td>';
  else if (kind === 'text') cells = `<td class="label">${spell(first)}</td><td class="${second.includes('\n') ? 'double' : 'single'}" colspan="2">${spell(second)}</td>`;
  else {
    const mark = kind.includes('marked') ? '<span class="tofu">?</span>' : '';
    cells = `<td class="${kind}" colspan="3">${mark}${spell(first)}</td>`;
  }
  return `<tr style="height:${height}px"><th class="${i ? '' : 'on'}">${i + 1}</th><td class="${i ? '' : 'cursor'}"></td>${cells}${spare}</tr>`;
}).join('');

document.getElementById('sheet').innerHTML =
  '<colgroup><col class="c-head"><col class="c-a"><col class="c-b"><col class="c-c"><col class="c-d">' +
  '<col>'.repeat(14) + '<col class="c-last"></colgroup>' +
  `<thead><tr><th></th>${letters.map((l, i) => `<th class="${i ? '' : 'on'}">${l}</th>`).join('')}</tr></thead>` +
  `<tbody>${body}</tbody>`;
```
